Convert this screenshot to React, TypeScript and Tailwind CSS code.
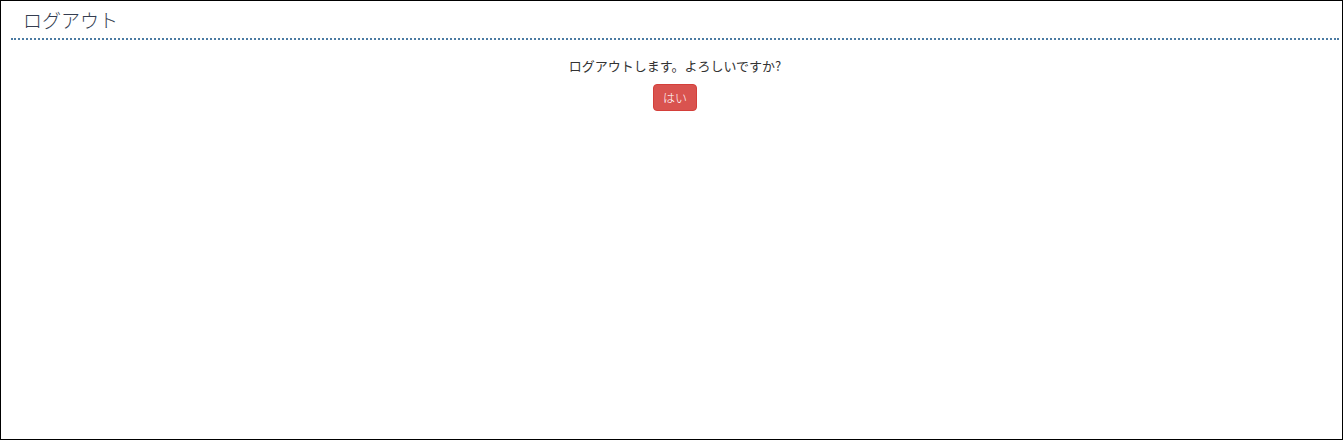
export default function App() {
  return (
    <div
      className="w-[1343px] h-[440px] border border-black bg-white"
      style={{ fontFamily: '"Noto Sans CJK JP", "Noto Sans", sans-serif' }}
    >
      <div className="ml-[10px] mr-[3px]">
        <div className="h-[39px] border-b-2 border-dotted border-[#4b7ba3] pl-[12px] pt-[7px]">
          <h1 className="text-[19px] leading-[24px] text-[#343d50] font-light">ログアウト</h1>
        </div>
        <div className="flex flex-col items-center pt-[17px]">
          <p className="text-[13px] leading-[18px] text-[#333333]">ログアウトします。よろしいですか?</p>
          <button className="mt-[9px] w-[44px] h-[27px] rounded-[4px] bg-[#d9534f] border border-[#d43f3a] text-white text-[12px] leading-none font-light">
            はい
          </button>
        </div>
      </div>
    </div>
  );
}
